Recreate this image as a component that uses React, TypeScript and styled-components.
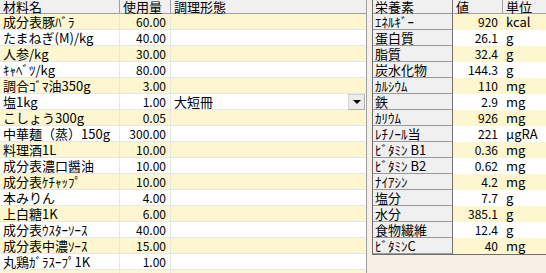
import React from 'react';
import styled, { createGlobalStyle } from 'styled-components';

const GlobalStyle = createGlobalStyle`
  html, body {
    margin: 0;
    padding: 0;
    background: #ffffff;
  }
  body {
    font-family: "Noto Sans CJK JP", "Noto Sans", sans-serif;
    font-size: 13px;
  }
`;

const ingredients: { name: string; amount: string; cut?: string }[] = [
  { name: '成分表豚ﾊﾞﾗ', amount: '60.00' },
  { name: 'たまねぎ(M)/kg', amount: '40.00' },
  { name: '人参/kg', amount: '30.00' },
  { name: 'ｷｬﾍﾞﾂ/kg', amount: '80.00' },
  { name: '調合ｺﾞﾏ油350g', amount: '3.00' },
  { name: '塩1kg', amount: '1.00', cut: '大短冊' },
  { name: 'こしょう300g', amount: '0.05' },
  { name: '中華麺（蒸）150g', amount: '300.00' },
  { name: '料理酒1L', amount: '10.00' },
  { name: '成分表濃口醤油', amount: '10.00' },
  { name: '成分表ｹﾁｬｯﾌﾟ', amount: '10.00' },
  { name: '本みりん', amount: '4.00' },
  { name: '上白糖1K', amount: '6.00' },
  { name: '成分表ｳｽﾀｰｿｰｽ', amount: '40.00' },
  { name: '成分表中濃ｿｰｽ', amount: '15.00' },
  { name: '丸鶏ｶﾞﾗｽｰﾌﾟ1K', amount: '1.00' },
  { name: '', amount: '' },
];

const nutrients = [
  ['ｴﾈﾙｷﾞｰ', '920', 'kcal'],
  ['蛋白質', '26.1', 'g'],
  ['脂質', '32.4', 'g'],
  ['炭水化物', '144.3', 'g'],
  ['ｶﾙｼｳﾑ', '110', 'mg'],
  ['鉄', '2.9', 'mg'],
  ['ｶﾘｳﾑ', '926', 'mg'],
  ['ﾚﾁﾉｰﾙ当', '221', 'μgRA'],
  ['ﾋﾞﾀﾐﾝ B1', '0.36', 'mg'],
  ['ﾋﾞﾀﾐﾝ B2', '0.62', 'mg'],
  ['ﾅｲｱｼﾝ', '4.2', 'mg'],
  ['塩分', '7.7', 'g'],
  ['水分', '385.1', 'g'],
  ['食物繊維', '12.4', 'g'],
  ['ﾋﾞﾀﾐﾝC', '40', 'mg'],
];

const Screen = styled.div`
  display: flex;
  width: 546px;
  height: 273px;
  overflow: hidden;
  background: #f7eee5;
`;

const RecipeGrid = styled.div`
  width: 366px;
  flex: none;
  background: #ffffff;
  border-right: 1px solid #a0a0a0;
`;

const RecipeRow = styled.div<{ $alt?: boolean }>`
  display: grid;
  grid-template-columns: 120px 51px 1fr;
  height: 16px;
  background: ${({ $alt }) => ($alt ? '#fdf6cf' : '#ffffff')};
`;

const HeaderRow = styled(RecipeRow)`
  height: 14px;
  background: #f0f0f0;
`;

const HeadCell = styled.div`
  height: 13px;
  line-height: 13px;
  padding-left: 3px;
  border-right: 1px solid #a0a0a0;
  border-bottom: 1px solid #a0a0a0;
  white-space: nowrap;
  &:last-child {
    border-right: none;
  }
`;

const Cell = styled.div<{ $num?: boolean }>`
  display: flex;
  align-items: center;
  justify-content: ${({ $num }) => ($num ? 'flex-end' : 'flex-start')};
  height: 15px;
  padding: 0 ${({ $num }) => ($num ? '4px' : '0')} 0 ${({ $num }) => ($num ? '0' : '3px')};
  font-size: ${({ $num }) => ($num ? '12px' : '13px')};
  border-right: 1px solid #e6e6e6;
  border-bottom: 1px solid #e6e6e6;
  white-space: nowrap;
  line-height: 15px;
  &:last-child {
    border-right: none;
  }
`;

const ComboText = styled.span`
  flex: 1;
`;

const ComboButton = styled.span`
  flex: none;
  width: 15px;
  height: 14px;
  margin-right: 1px;
  display: grid;
  place-items: center;
  background: #ececec;
  border: 1px solid #d4d4d4;
  border-right-color: #b0b0b0;
  border-bottom-color: #b0b0b0;
`;

const Arrow = styled.span`
  width: 0;
  height: 0;
  border-left: 4px solid transparent;
  border-right: 4px solid transparent;
  border-top: 4px solid #000000;
`;

const NutrientPanel = styled.div`
  flex: 1;
  padding-left: 5px;
  display: flex;
  flex-direction: column;
`;

const NutrientTable = styled.div`
  border-left: 1px solid #707070;
  border-bottom: 1px solid #707070;
`;

const NutrientRow = styled.div<{ $alt?: boolean }>`
  display: grid;
  grid-template-columns: 80px 50px 1fr;
  height: 16px;
  background: ${({ $alt }) => ($alt ? '#fdf6cf' : '#ffffff')};
`;

const NutrientHeader = styled(NutrientRow)`
  height: 14px;
  background: #f0f0f0;
`;

const Label = styled.div<{ $head?: boolean }>`
  height: ${({ $head }) => ($head ? '13px' : '15px')};
  line-height: ${({ $head }) => ($head ? '13px' : '15px')};
  padding-left: 2px;
  background: #f0f0f0;
  border-right: 1px solid #707070;
  border-bottom: 1px solid #9a9a9a;
  white-space: nowrap;
`;

const Value = styled.div`
  height: 16px;
  line-height: 16px;
  text-align: right;
  padding-right: 5px;
  font-size: 12px;
  white-space: nowrap;
`;

const Unit = styled.div`
  height: 16px;
  line-height: 16px;
  padding-left: 3px;
  white-space: nowrap;
`;

export default function App() {
  return (
    <>
      <GlobalStyle />
      <Screen>
        <RecipeGrid>
          <HeaderRow>
            <HeadCell>材料名</HeadCell>
            <HeadCell>使用量</HeadCell>
            <HeadCell>調理形態</HeadCell>
          </HeaderRow>
          {ingredients.map((item, i) => (
            <RecipeRow key={i} $alt={i % 2 === 0}>
              <Cell>{item.name}</Cell>
              <Cell $num>{item.amount}</Cell>
              <Cell>
                {item.cut && (
                  <>
                    <ComboText>{item.cut}</ComboText>
                    <ComboButton>
                      <Arrow />
                    </ComboButton>
                  </>
                )}
              </Cell>
            </RecipeRow>
          ))}
        </RecipeGrid>
        <NutrientPanel>
          <NutrientTable>
            <NutrientHeader>
              <Label $head>栄養素</Label>
              <HeadCell>値</HeadCell>
              <HeadCell>単位</HeadCell>
            </NutrientHeader>
            {nutrients.map(([name, value, unit], i) => (
              <NutrientRow key={name} $alt={i % 2 === 0}>
                <Label>{name}</Label>
                <Value>{value}</Value>
                <Unit>{unit}</Unit>
              </NutrientRow>
            ))}
          </NutrientTable>
        </NutrientPanel>
      </Screen>
    </>
  );
}
